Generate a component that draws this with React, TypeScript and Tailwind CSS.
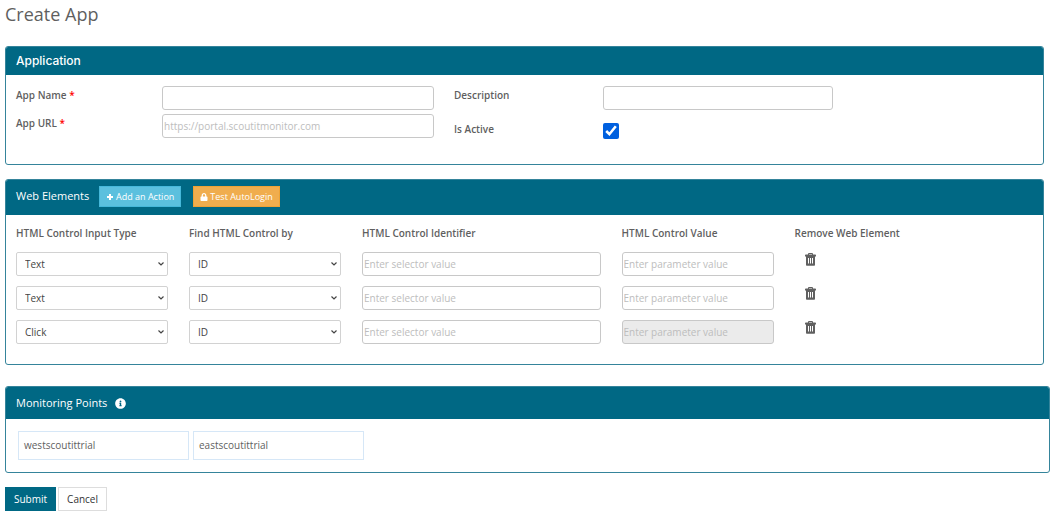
import { ReactNode } from 'react';
import { FaInfoCircle, FaLock } from 'react-icons/fa';

const elements = [
  { id: 1, type: 'Text', findBy: 'ID', disabled: false },
  { id: 2, type: 'Text', findBy: 'ID', disabled: false },
  { id: 3, type: 'Click', findBy: 'ID', disabled: true },
];

const points = ['westscoutittrial', 'eastscoutittrial'];

const inputClass =
  'block h-6 w-full rounded-[3px] border border-[#c8c8c8] bg-white px-px text-[10px] text-[#555] placeholder:text-[#bdbdbd] disabled:bg-[#ebebeb]';
const labelClass = 'pt-px text-[10px] leading-4 font-semibold text-[#5f5f5f]';

const TrashIcon = () => (
  <svg viewBox="0 0 11 13" className="h-[13px] w-[11px]" aria-hidden="true">
    <path
      fill="#606060"
      fillRule="evenodd"
      d="M3 1.500V1Q3 0 4 0h3q1 0 1 1v.5h2.200q.8 0 .8.8V3.500H0v-1.200q0-.8.8-.8zM4 1.500h3V1H4zM1 3.500h9V12q0 .7-.8.7H1.800Q1 12.700 1 12zM3 5v5.500h1V5zM5 5v5.500h1V5zM7 5v5.500h1V5z"
    />
  </svg>
);

const PlusIcon = () => (
  <svg viewBox="0 0 8 8" className="size-2" aria-hidden="true">
    <path fill="currentColor" d="M3 1h2v2h2v2H5v2H3V5H1V3h2z" />
  </svg>
);

const Select = ({ label, value, options }: { label: string; value: string; options: string[] }) => (
  <div className="relative">
    <select
      aria-label={label}
      defaultValue={value}
      className="block h-6 w-full appearance-none rounded-[2px] border border-[#d2d2d2] bg-white px-2 text-[10px] text-[#444]"
    >
      {options.map((option) => (
        <option key={option}>{option}</option>
      ))}
    </select>
    <svg viewBox="0 0 6 4" className="pointer-events-none absolute top-[10px] right-1 h-1 w-[6px]" aria-hidden="true">
      <path d="M.5.5 3 3 5.500.5" fill="none" stroke="#444" strokeWidth="1.200" />
    </svg>
  </div>
);

const Panel = ({ header, className, children }: { header: ReactNode; className: string; children: ReactNode }) => (
  <section className={`overflow-hidden rounded-[3px] border border-[#35849b] ${className}`}>
    {header}
    {children}
  </section>
);

const Required = () => <span className="text-[#ff0000]">*</span>;

const App = () => {
  return (
    <main className="bg-white pr-[6px] pl-[5px] font-['Open_Sans',sans-serif] text-[10px] text-[#5f5f5f]">
      <h1 className="pt-[2px] pb-5 text-[18px] leading-6">Create App</h1>

      <form onSubmit={(e) => e.preventDefault()}>
        <Panel
          className="mr-[6px]"
          header={
            <h2 className="bg-[#006884] px-[10px] py-[6px] font-['Inter',sans-serif] text-[12px] leading-4 font-medium text-white">
              Application
            </h2>
          }
        >
          <div className="grid grid-cols-[438fr_379fr_200fr] px-[10px] pt-[11px] pb-[25px]">
            <div className="grid grid-cols-[146fr_272fr_20fr] content-start gap-y-1">
              <label htmlFor="name" className={labelClass}>
                App Name <Required />
              </label>
              <input id="name" type="text" className={inputClass} />
              <span />
              <label htmlFor="url" className={labelClass}>
                App URL <Required />
              </label>
              <input id="url" type="text" placeholder="https://portal.scoutitmonitor.com" className={inputClass} />
            </div>
            <div className="grid grid-cols-[149fr_230fr] content-start gap-y-[10px]">
              <label htmlFor="description" className={labelClass}>
                Description
              </label>
              <input id="description" type="text" className={inputClass} />
              <label htmlFor="active" className={labelClass}>
                Is Active
              </label>
              <input id="active" type="checkbox" defaultChecked className="mt-[3px] size-4 accent-[#0060df]" />
            </div>
          </div>
        </Panel>

        <Panel
          className="mt-[14px] mr-[6px]"
          header={
            <div className="flex items-start bg-[#006884] px-[10px] pt-[6px] pb-2">
              <h2 className="w-[83px] text-[11px] leading-5 text-white">Web Elements</h2>
              <button
                type="button"
                className="flex h-[21px] items-center gap-[2px] border border-[#46b8da] bg-[#5bc0de] px-[6px] text-[9px] whitespace-nowrap text-white"
              >
                <PlusIcon />
                Add an Action
              </button>
              <button
                type="button"
                className="ml-3 flex h-[21px] items-center gap-[2px] border border-[#eea236] bg-[#f0ad4e] px-[6px] text-[9px] whitespace-nowrap text-white"
              >
                <FaLock className="size-2" />
                Test AutoLogin
              </button>
            </div>
          }
        >
          <div className="px-[10px] pt-[10px] pb-5">
            <div className="grid grid-cols-12 gap-x-[21px] pb-[11px] leading-4 font-semibold">
              <span className="col-span-2 whitespace-nowrap">HTML Control Input Type</span>
              <span className="col-span-2 whitespace-nowrap">Find HTML Control by</span>
              <span className="col-span-3 whitespace-nowrap">HTML Control Identifier</span>
              <span className="col-span-2 whitespace-nowrap">HTML Control Value</span>
              <span className="col-span-2 whitespace-nowrap">Remove Web Element</span>
            </div>
            <div className="grid gap-y-[10px]">
              {elements.map((el) => (
                <div key={el.id} className="grid grid-cols-12 gap-x-[21px]">
                  <div className="col-span-2">
                    <Select label="HTML Control Input Type" value={el.type} options={['Text', 'Click']} />
                  </div>
                  <div className="col-span-2">
                    <Select label="Find HTML Control by" value={el.findBy} options={['ID']} />
                  </div>
                  <div className="col-span-3">
                    <input
                      type="text"
                      aria-label="HTML Control Identifier"
                      placeholder="Enter selector value"
                      className={inputClass}
                    />
                  </div>
                  <div className="col-span-2">
                    <input
                      type="text"
                      aria-label="HTML Control Value"
                      placeholder="Enter parameter value"
                      disabled={el.disabled}
                      className={inputClass}
                    />
                  </div>
                  <div className="col-span-2 pt-px pl-[10px]">
                    <button type="button" aria-label="Remove Web Element" className="block">
                      <TrashIcon />
                    </button>
                  </div>
                </div>
              ))}
            </div>
          </div>
        </Panel>

        <Panel
          className="mt-[21px]"
          header={
            <div className="flex items-center gap-2 bg-[#006884] px-[10px] py-[6px] text-white">
              <h2 className="text-[11px] leading-5">Monitoring Points</h2>
              <FaInfoCircle className="size-[11px]" />
            </div>
          }
        >
          <div className="flex gap-1 px-3 py-3">
            {points.map((point) => (
              <button
                key={point}
                type="button"
                className="h-[29px] w-[171px] border border-[#d6e7f7] px-[5px] text-left text-[10px]"
              >
                {point}
              </button>
            ))}
          </div>
        </Panel>

        <div className="mt-[14px] flex gap-[2px]">
          <button type="submit" className="h-6 bg-[#006884] px-[9px] text-[10px] text-white">
            Submit
          </button>
          <button type="button" className="h-6 border border-[#ddd] bg-white px-2 text-[10px] text-[#333]">
            Cancel
          </button>
        </div>
      </form>
    </main>
  );
};

export default App;
